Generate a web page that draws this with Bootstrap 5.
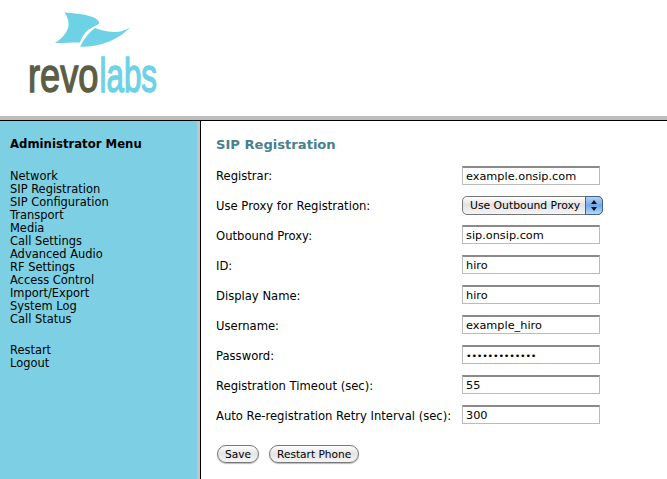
<!DOCTYPE html>
<html lang="en"><head><meta charset="utf-8"><title>SIP Registration</title>
<link href="https://cdn.jsdelivr.net/npm/bootstrap@5.3.0/dist/css/bootstrap.min.css" rel="stylesheet">
<style>
html,body{height:100%;}
body{width:667px;height:479px;overflow:hidden;background:#fff;font-family:"DejaVu Sans",Verdana,sans-serif;font-size:11.6px;color:#000;}
.top-band{height:116px;}
.logo-svg{display:block;margin-left:26px;}
.page-body{height:363px;border-top:4px solid #bdbdbd;}
.page-inner{height:100%;border-top:1px solid #000;}
.side-menu{width:197px;background:#7dd0e3;padding:16px 0 0 10px;}
.side-gap{width:3px;background:#c4c4c4;}
.main-pane{border-left:1px solid #000;padding:16px 0 0 15px;}
.side-title{font-size:11.7px;font-weight:700;line-height:14px;margin-bottom:19px;}
.side-link{display:block;line-height:13px;color:#000;text-decoration:none;font-size:11.45px;}
.side-spacer{height:18px;}
.form-title{font-size:13.1px;font-weight:700;color:#47808f;line-height:16px;margin:0 0 7px;}
.form-line{height:30px;}
.field-label{width:246px;flex-shrink:0;white-space:nowrap;padding-top:3px;}
.text-box{width:138px;height:19px;box-sizing:border-box;align-self:flex-start;margin-top:5px;border:1px solid #bbb;border-top:2px solid #8a8a8a;padding:0 3px;font:11.3px "DejaVu Sans",Verdana,sans-serif;color:#000;background:#fff;border-radius:0;outline:0;}
.first-box{margin-top:6px;}
.pw-box{letter-spacing:-.2px;font-size:9.5px;}
.select-wrap{width:141px;height:19px;align-self:flex-start;margin-top:6px;}
.mac-select{appearance:none;width:100%;height:100%;border:1px solid #777;border-radius:5px;padding:0 0 0 7px;font:10.8px "DejaVu Sans",Verdana,sans-serif;color:#000;background:linear-gradient(#fff,#e2e2e2 45%,#f4f4f4);}
.select-arrow{position:absolute;top:0;right:0;width:18px;height:19px;}
.mac-btn{height:18px;padding:0 7px;border:1px solid #777;border-radius:9px;font:10.6px "DejaVu Sans",Verdana,sans-serif;color:#000;background:linear-gradient(#fff,#e4e4e4 50%,#f6f6f6);box-shadow:0 1px 1px #bbb;line-height:15px;}
.btn-row{margin-top:15px;padding-left:1px;gap:10px;}
</style></head>
<body>
<div class="top-band">
<svg class="logo-svg" width="200" height="110" viewBox="26 0 200 110">
<path d="M64.500 12.500C76 13 89 15 95 18C98 20 99.500 22 99 23.500C96 26 90 28 86 32C83 35 81 39 80 42.500C72 42.500 63 43 55 43C62 38.500 67 33 68.500 26C69 21 67 16 64.500 12.500Z" fill="#6ed2e6"/>
<path d="M95 28C102 30.500 109 32 115 32C120 32 126 30 130 27.500C125 33 117 38.500 108 42C100 45 90 47 80 46.800C83 41 88 33 95 28Z" fill="#6ed2e6"/>
<text transform="translate(28 91.500) scale(.74 1)" font-family="'Liberation Sans',sans-serif" font-size="49" fill="#5d5d45" stroke="#5d5d45" stroke-width="1.500">revo</text>
<text transform="translate(99.500 91.500) scale(.64 1)" font-family="'Liberation Sans',sans-serif" font-size="49" fill="#6ed2e6" stroke="#6ed2e6" stroke-width="1.500">labs</text>
</svg>
</div>
<div class="page-body"><div class="page-inner d-flex">
<nav class="side-menu flex-shrink-0">
<div class="side-title">Administrator Menu</div>
<a class="side-link" href="#">Network</a>
<a class="side-link" href="#">SIP Registration</a>
<a class="side-link" href="#">SIP Configuration</a>
<a class="side-link" href="#">Transport</a>
<a class="side-link" href="#">Media</a>
<a class="side-link" href="#">Call Settings</a>
<a class="side-link" href="#">Advanced Audio</a>
<a class="side-link" href="#">RF Settings</a>
<a class="side-link" href="#">Access Control</a>
<a class="side-link" href="#">Import/Export</a>
<a class="side-link" href="#">System Log</a>
<a class="side-link" href="#">Call Status</a>
<div class="side-spacer"></div>
<a class="side-link" href="#">Restart</a>
<a class="side-link" href="#">Logout</a>
</nav>
<div class="side-gap flex-shrink-0"></div>
<main class="main-pane flex-grow-1">
<h1 class="form-title">SIP Registration</h1>
<form>
<div class="form-line d-flex align-items-center"><label class="field-label">Registrar:</label><input class="text-box first-box" value="example.onsip.com"></div>
<div class="form-line d-flex align-items-center"><label class="field-label">Use Proxy for Registration:</label>
<div class="select-wrap position-relative"><select class="mac-select"><option>Use Outbound Proxy</option></select>
<svg class="select-arrow" viewBox="0 0 18 19"><defs><linearGradient id="blu" x1="0" y1="0" x2="0" y2="1"><stop offset="0" stop-color="#b7d4f5"/><stop offset=".5" stop-color="#6fa9ec"/><stop offset="1" stop-color="#b2dcfa"/></linearGradient></defs><path d="M.5.500H13a4.500 4.500 0 0 1 4.500 4.500v9a4.500 4.500 0 0 1-4.500 4.500H.5Z" fill="url(#blu)" stroke="#4a5f8a"/><path d="M9 4l3 4H6ZM9 15l3-4H6Z" fill="#111"/></svg></div></div>
<div class="form-line d-flex align-items-center"><label class="field-label">Outbound Proxy:</label><input class="text-box" value="sip.onsip.com"></div>
<div class="form-line d-flex align-items-center"><label class="field-label">ID:</label><input class="text-box" value="hiro"></div>
<div class="form-line d-flex align-items-center"><label class="field-label">Display Name:</label><input class="text-box" value="hiro"></div>
<div class="form-line d-flex align-items-center"><label class="field-label">Username:</label><input class="text-box" value="example_hiro"></div>
<div class="form-line d-flex align-items-center"><label class="field-label">Password:</label><input class="text-box pw-box" type="password" value="examplepasswo"></div>
<div class="form-line d-flex align-items-center"><label class="field-label">Registration Timeout (sec):</label><input class="text-box" value="55"></div>
<div class="form-line d-flex align-items-center"><label class="field-label">Auto Re-registration Retry Interval (sec):</label><input class="text-box" value="300"></div>
<div class="btn-row d-flex"><button type="button" class="mac-btn">Save</button><button type="button" class="mac-btn">Restart Phone</button></div>
</form>
</main>
</div></div>
<script src="https://cdn.jsdelivr.net/npm/bootstrap@5.3.0/dist/js/bootstrap.bundle.min.js"></script>
</body></html>
